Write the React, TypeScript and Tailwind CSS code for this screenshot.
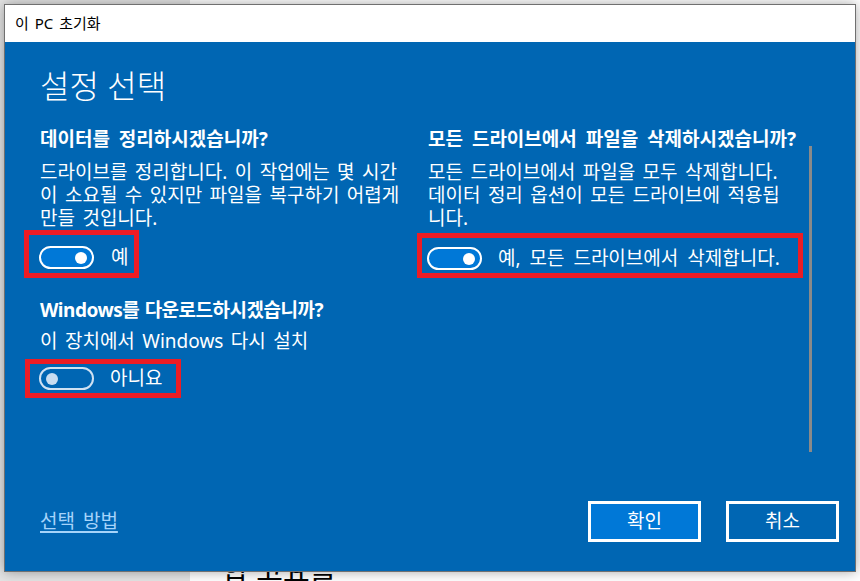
import clsx from "clsx";
import type { ReactNode } from "react";

function Toggle({ on }: { on: boolean }) {
  if (on) {
    return (
      <span className="flex h-[23px] w-[55px] shrink-0 items-center justify-end rounded-full border-2 border-white bg-[#0078d7] pr-[5px]">
        <span className="h-[12px] w-[12px] rounded-full bg-white" />
      </span>
    );
  }
  return (
    <span className="flex h-[23px] w-[55px] shrink-0 items-center rounded-full border-2 border-[#cfe1f2] pl-[5px]">
      <span className="h-[12px] w-[12px] rounded-full bg-[#c8ddf1]" />
    </span>
  );
}

// red annotation frame drawn round a toggle in the screenshot
function Marked({ className, children }: { className: string; children: ReactNode }) {
  return <div className={clsx("flex items-center border-[5px] border-[#ec1c24]", className)}>{children}</div>;
}

export default function App() {
  return (
    <div className="relative flex h-[581px] w-[860px] overflow-hidden font-['Noto_Sans','Noto_Sans_CJK_KR',sans-serif]">
      <div className="w-[190px] bg-[#e4e4e4]" />
      <div className="flex flex-1 flex-col justify-end bg-white pl-[32px]">
        <span className="-mb-[4px] text-[29px] leading-[28px] text-black">합 고요를</span>
      </div>

      <div className="absolute left-[4px] top-[4px] flex h-[568px] w-[852px] flex-col border border-[#707070] shadow-[0_0_12px_rgba(0,0,0,0.35)]">
        <div className="flex h-[37px] items-center bg-white pl-[10px] text-[15px] text-black [word-spacing:2px]">이 PC 초기화</div>

        <div className="relative flex flex-1 flex-col bg-[#0066b3] pl-[35px] text-white">
          <h1 className="mt-[24px] text-[32px] font-light leading-[40px]">설정 선택</h1>

          <div className="flex text-[19px] [word-spacing:2.5px]">
            <div className="flex w-[388px] flex-col">
              <h2 className="mt-[21px] font-bold leading-[24px] [word-spacing:4px]">데이터를 정리하시겠습니까?</h2>
              <p className="mt-[10px] whitespace-nowrap leading-[23px]">
                드라이브를 정리합니다. 이 작업에는 몇 시간
                <br />
                이 소요될 수 있지만 파일을 복구하기 어렵게
                <br />
                만들 것입니다.
              </p>
              <Marked className="-ml-[16px] h-[48px] w-[115px] gap-[17px] pl-[10px] pt-[7px]">
                <Toggle on />
                <span className="leading-[23px]">예</span>
              </Marked>

              <h2 className="mt-[20px] whitespace-nowrap font-bold leading-[24px] tracking-[-0.5px] [word-spacing:1px]">Windows를 다운로드하시겠습니까?</h2>
              <p className="mt-[8px] whitespace-nowrap leading-[23px]">이 장치에서 Windows 다시 설치</p>
              <Marked className="-ml-[15px] mt-[6px] h-[39px] w-[156px] gap-[16px] pl-[9px]">
                <Toggle on={false} />
                <span className="leading-[23px]">아니요</span>
              </Marked>
            </div>

            <div className="flex flex-col">
              <h2 className="mt-[21px] whitespace-nowrap font-bold leading-[24px] [word-spacing:4px]">모든 드라이브에서 파일을 삭제하시겠습니까?</h2>
              <p className="mt-[10px] whitespace-nowrap leading-[23px]">
                모든 드라이브에서 파일을 모두 삭제합니다.
                <br />
                데이터 정리 옵션이 모든 드라이브에 적용됩
                <br />
                니다.
              </p>
              <Marked className="-ml-[11px] mt-[3px] h-[45px] w-[386px] gap-[16px] pl-[5px] pt-[6px]">
                <Toggle on />
                <span className="whitespace-nowrap leading-[23px] [word-spacing:4px]">예, 모든 드라이브에서 삭제합니다.</span>
              </Marked>
            </div>
          </div>

          <div className="absolute left-[804px] top-[104px] h-[306px] w-[3px] bg-[#8a8a8a]" />

          <div className="mb-[29px] mt-auto flex h-[41px] items-center justify-between pr-[16px] text-[19px]">
            <a className="leading-[23px] text-[#a6d4fa] underline decoration-2 underline-offset-[3px] [word-spacing:3px]">선택 방법</a>
            <div className="flex gap-[25px]">
              <button className="h-[41px] w-[113px] border-[3px] border-white bg-[#0078d7] text-white">확인</button>
              <button className="h-[41px] w-[113px] border-[3px] border-white text-white">취소</button>
            </div>
          </div>
        </div>
      </div>
    </div>
  );
}
